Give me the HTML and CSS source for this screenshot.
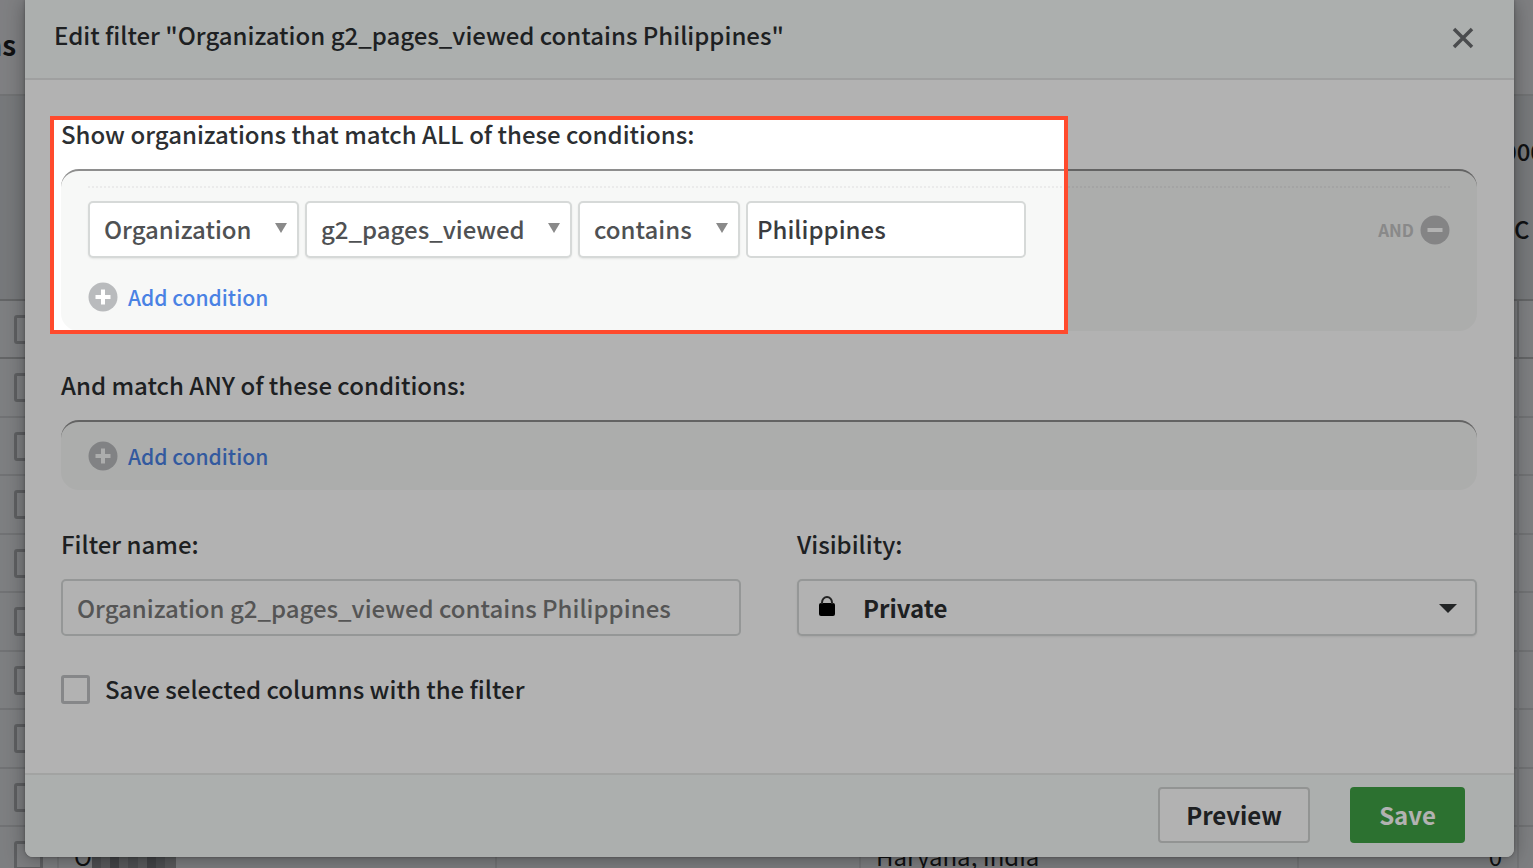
FILE: index.html
```html
<!DOCTYPE html>
<html lang="en">
<head>
<meta charset="utf-8">
<title>Edit filter</title>
<link rel="stylesheet" href="styles.css">
</head>
<body>
<div class="backdrop">
  <div class="appbar"><span>ns</span></div>
  <div class="summary"><div class="totals"><span>0000</span><span class="currency">C</span></div></div>
  <table class="orgs">
    <colgroup><col class="c-check"><col class="c-name"><col class="c-addr"><col class="c-label"><col class="c-count"><col></colgroup>
    <tbody>
      <tr><td><input type="checkbox" aria-label="Select row"></td><td></td><td></td><td></td><td></td><td></td></tr>
      <tr><td><input type="checkbox" aria-label="Select row"></td><td></td><td></td><td></td><td></td><td></td></tr>
      <tr><td><input type="checkbox" aria-label="Select row"></td><td></td><td></td><td></td><td></td><td></td></tr>
      <tr><td><input type="checkbox" aria-label="Select row"></td><td></td><td></td><td></td><td></td><td></td></tr>
      <tr><td><input type="checkbox" aria-label="Select row"></td><td></td><td></td><td></td><td></td><td></td></tr>
      <tr><td><input type="checkbox" aria-label="Select row"></td><td></td><td></td><td></td><td></td><td></td></tr>
      <tr><td><input type="checkbox" aria-label="Select row"></td><td></td><td></td><td></td><td></td><td></td></tr>
      <tr><td><input type="checkbox" aria-label="Select row"></td><td></td><td></td><td></td><td></td><td></td></tr>
      <tr><td><input type="checkbox" aria-label="Select row"></td><td></td><td></td><td></td><td></td><td></td></tr>
      <tr><td><input type="checkbox" aria-label="Select row"></td><td><span class="org-name">O<svg class="mosaic" width="84" height="20" viewBox="0 0 84 20"><path fill="#808285" d="M0 3h84v17H0z"/><path fill="#606266" d="M18 3h9v17h-9zM55 3h9v17h-9z"/><path fill="#707276" d="M0 3h9v17H0zM36 3h10v17H36zM64 3h9v17h-9z"/><path d="M2 3V0M8 3V0M15 3V1M22 3V0M29 3V0M36 3V1M59 3V0M66 3V0M76 3V0" stroke="#222" stroke-width="3"/></svg></span></td><td></td><td>Haryana, India</td><td class="num">0</td><td></td></tr>
    </tbody>
  </table>
</div>

<main class="modal" role="dialog" aria-labelledby="title">
  <header class="modal-head">
    <h1 id="title">Edit filter "Organization g2_pages_viewed contains Philippines"</h1>
    <button class="close" type="button" aria-label="Close"><svg width="22" height="22" viewBox="0 0 22 22"><path d="M2 2l18 18M20 2L2 20" fill="none" stroke="#6b6d70" stroke-width="3.500"/></svg></button>
  </header>

  <form class="modal-body">
    <section class="group">
      <h2>Show organizations that match ALL of these conditions:</h2>
      <div class="panel panel-all">
        <div class="condition">
          <span class="pick pick-object"><select aria-label="Object"><option>Organization</option></select><svg width="12" height="10" viewBox="0 0 12 10"><path d="M0 0h12L6 10z"/></svg></span>
          <span class="pick pick-field"><select aria-label="Field"><option>g2_pages_viewed</option></select><svg width="12" height="10" viewBox="0 0 12 10"><path d="M0 0h12L6 10z"/></svg></span>
          <span class="pick pick-op"><select aria-label="Operator"><option>contains</option></select><svg width="12" height="10" viewBox="0 0 12 10"><path d="M0 0h12L6 10z"/></svg></span>
          <input class="value" type="text" aria-label="Value" value="Philippines">
          <span class="and">AND</span>
          <button class="remove" type="button" aria-label="Remove condition"><svg width="30" height="30" viewBox="0 0 30 30"><circle cx="15" cy="15" r="14.500" fill="#bdbdbf"/><path d="M7.500 15h15" stroke="#fff" stroke-width="4"/></svg></button>
        </div>
        <button class="add" type="button"><svg width="30" height="30" viewBox="0 0 30 30"><circle cx="15" cy="15" r="14.500" fill="#b9bbbd"/><path d="M7.500 15h15M15 7.500v15" stroke="#fff" stroke-width="4"/></svg>Add condition</button>
      </div>
      <div class="spotlight"></div>
    </section>

    <section class="group">
      <h2>And match ANY of these conditions:</h2>
      <div class="panel panel-any">
        <button class="add" type="button"><svg width="30" height="30" viewBox="0 0 30 30"><circle cx="15" cy="15" r="14.500" fill="#b9bbbd"/><path d="M7.500 15h15M15 7.500v15" stroke="#f7f8f8" stroke-width="4"/></svg>Add condition</button>
      </div>
    </section>

    <div class="fields">
      <div class="group">
        <label for="name">Filter name:</label>
        <input class="name" id="name" type="text" placeholder="Organization g2_pages_viewed contains Philippines">
      </div>
      <div class="group">
        <label for="visibility">Visibility:</label>
        <span class="visibility">
          <svg class="lock" width="16" height="20" viewBox="0 0 16 20"><rect y="7" width="16" height="13" rx="2"/><path d="M3 8V6.500a5 5.500 0 0 1 10 0V8" fill="none" stroke="#333" stroke-width="2"/></svg>
          <select id="visibility"><option>Private</option></select>
          <svg class="caret" width="18" height="9" viewBox="0 0 18 9"><path d="M0 0h18L9 9z"/></svg>
        </span>
      </div>
    </div>

    <label class="save-columns"><input type="checkbox">Save selected columns with the filter</label>
  </form>

  <footer class="modal-foot">
    <button class="btn btn-plain" type="button">Preview</button>
    <button class="btn btn-save" type="button">Save</button>
  </footer>
</main>
</body>
</html>
```
FILE: styles.css
```css
* { box-sizing: border-box; }

body {
  margin: 0;
  min-height: 100vh;
  position: relative;
  overflow: hidden;
  background: #b4b6b9;
  color: #2c2f32;
  font: 24px/34px "Noto Sans CJK SC", "Noto Sans", sans-serif;
}

h1, h2 { margin: 0; font-size: 24px; font-weight: 500; line-height: 34px; }
button, input, select { font: inherit; color: inherit; margin: 0; }
.modal { font-weight: 500; }
button { padding: 0; border: 0; background: none; cursor: pointer; }
svg { display: block; flex: none; }

/* List view behind the dialog */
.backdrop { position: absolute; inset: 0; overflow: hidden; color: #17181a; }
.appbar {
  display: flex;
  height: 96px;
  align-items: center;
  padding-bottom: 6px;
  background: #b6b7ba;
  border-bottom: 2px solid #a2a4a6;
  font-size: 28px;
  font-weight: 700;
}
.appbar span { display: flex; justify-content: flex-end; width: 16px; }
.summary {
  display: flex;
  justify-content: flex-end;
  height: 205px;
  padding-top: 38px;
  background: #aaadb0;
  border-bottom: 2px solid #8f9193;
}
.totals {
  display: grid;
  grid-auto-rows: 36px;
  row-gap: 42px;
  width: 40px;
  margin-right: -10px;
  font-weight: 500;
}
.currency { padding-left: 11px; }
.orgs { width: 100%; table-layout: fixed; border-collapse: separate; border-spacing: 0; }
.c-check { width: 59px; }
.c-name, .c-label { width: 438px; }
.c-addr { width: 364px; }
.c-count { width: 220px; }
.orgs td {
  height: 58px;
  padding: 0 15px;
  border-right: 2px solid #a6a8ab;
  border-bottom: 2px solid #a2a4a7;
  white-space: nowrap;
}
.orgs tr:nth-child(even) td { height: 59px; }
.orgs tr:first-child td { border-bottom-color: #8f9193; border-right-color: #929497; }
.orgs td:last-child { border-right: 0; }
.orgs td:first-child { padding: 0 0 0 14px; }
.orgs .num { text-align: right; }
.org-name { display: flex; align-items: center; }
.mosaic { margin-top: 8px; }

input[type="checkbox"] {
  appearance: none;
  display: block;
  width: 29px;
  height: 29px;
  border: 3px solid #c0c2c4;
  border-radius: 3px;
}
.orgs input[type="checkbox"] { border-color: #888a8d; }

/* Dialog */
.modal {
  position: relative;
  margin: 0 19px 0 25px;
  background: #fff;
  border-radius: 0 0 8px 8px;
  box-shadow: 0 2px 20px rgba(0, 0, 0, .35), 0 0 3px rgba(0, 0, 0, .3);
}
.modal-head {
  display: flex;
  justify-content: space-between;
  align-items: center;
  height: 80px;
  padding: 0 40px 8px 29px;
  background: #f7fbf9;
  border-bottom: 2px solid #e4e6e5;
}
.close { padding-top: 6px; }

.modal-body {
  display: flex;
  flex-direction: column;
  gap: 37px;
  padding: 37px 37px 68px 36px;
}
.group { position: relative; display: flex; flex-direction: column; gap: 18px; }

.panel {
  padding: 0 27px 19px;
  background: #f7f8f7;
  border-top: 2px solid #8e8e8e;
  border-radius: 18px;
}
.panel-all { padding-top: 15px; }
.panel-any { padding-top: 19px; }

.condition {
  display: flex;
  align-items: center;
  gap: 6px;
  padding-top: 13px;
  margin-bottom: 24px;
  border-top: 2px dotted #ebebeb;
}
.pick { position: relative; display: flex; }
.pick-object { width: 211px; }
.pick-field { width: 267px; }
.pick-op { width: 162px; }
.pick select, .value, .name, .visibility {
  width: 100%;
  height: 57px;
  border: 2px solid #d6d9d8;
  border-radius: 5px;
  background: #fff;
  box-shadow: 0 1px 2px rgba(0, 0, 0, .08);
}
.pick select {
  appearance: none;
  padding: 0 14px 2px;
  color: #4f5153;
}
.pick svg { position: absolute; top: 22px; right: 12px; fill: #8a8a8a; pointer-events: none; }
.value { width: 280px; padding: 0 9px 2px; box-shadow: none; color: #3a3c3f; }
.and { margin-left: auto; color: #c4c5c5; font-size: 17px; font-weight: 700; }
.add {
  display: flex;
  align-items: center;
  gap: 10px;
  height: 30px;
  color: #4a82e4;
  font-size: 21px;
}

.fields { display: grid; grid-template-columns: 1fr 1fr; gap: 56px; }
.name { padding: 0 14px; box-shadow: none; }
.name::placeholder { color: #7a7a7a; opacity: 1; }
.visibility { position: relative; display: flex; }
.visibility select {
  flex: 1;
  appearance: none;
  padding: 0 64px;
  border: 0;
  background: none;
  font-weight: 700;
}
.lock { position: absolute; left: 20px; top: 15px; }
.caret { position: absolute; right: 18px; top: 23px; fill: #333537; pointer-events: none; }

.save-columns { display: flex; align-items: center; gap: 15px; height: 32px; }

.modal-foot {
  display: flex;
  justify-content: flex-end;
  gap: 40px;
  padding: 12px 49px 14px;
  background: #f7fbf9;
  border-top: 2px solid #e8eae9;
  border-radius: 0 0 8px 8px;
}
.btn { height: 56px; border-radius: 4px; font-weight: 700; }
.btn-plain { min-width: 152px; border: 2px solid #d2d4d3; background: #fff; }
.btn-save { min-width: 115px; background: #40a346; color: #fff; }

/* Highlighted area; everything outside it is dimmed */
.spotlight {
  position: absolute;
  z-index: 1;
  top: -1px;
  bottom: -3px;
  left: -11px;
  right: 409px;
  border: 4px solid #ff4a2d;
  box-shadow: 0 0 0 2000px rgba(0, 0, 0, .3);
  pointer-events: none;
}
```
